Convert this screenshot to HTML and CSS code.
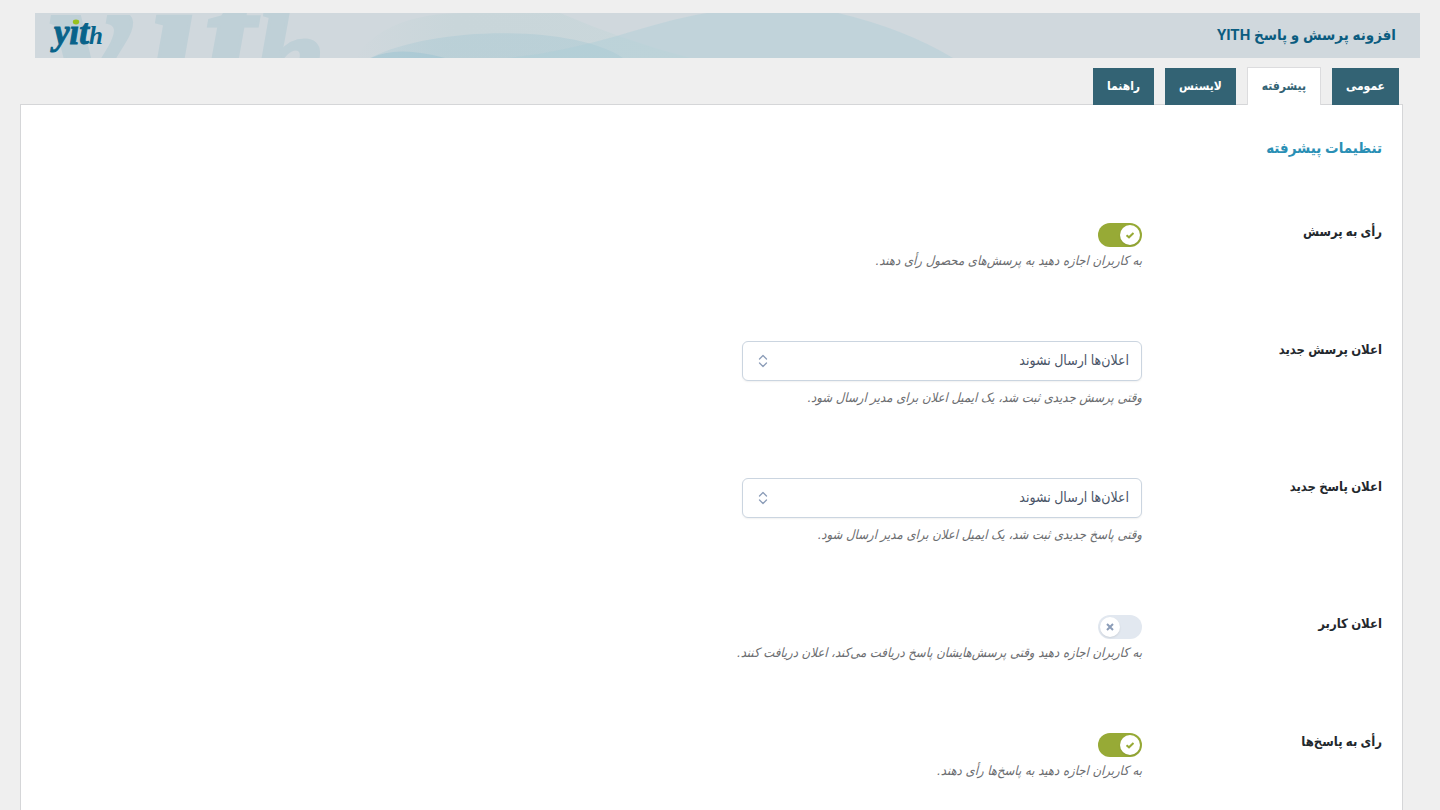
FILE: index.html
```html
<!DOCTYPE html>
<html lang="fa" dir="rtl">
<head>
<meta charset="UTF-8">
<meta name="viewport" content="width=device-width, initial-scale=1">
<title>افزونه پرسش و پاسخ YITH</title>
<link rel="stylesheet" href="styles.css">
</head>
<body>
  <header class="banner">
    <svg class="banner-art" width="1385" height="45" viewBox="0 0 1385 45" direction="ltr" aria-hidden="true">
      <defs>
        <linearGradient id="haze" x1="0" x2="1">
          <stop offset="0" stop-color="#c8d6da" stop-opacity="0"/>
          <stop offset="0.3" stop-color="#c9d6da"/>
          <stop offset="1" stop-color="#cad7db"/>
        </linearGradient>
        <linearGradient id="fade" x1="0" x2="1">
          <stop offset="0" stop-color="#a9c9d4" stop-opacity="0.3"/>
          <stop offset="0.25" stop-color="#a9c9d4" stop-opacity="0.45"/>
          <stop offset="1" stop-color="#a9c9d4" stop-opacity="0.45"/>
        </linearGradient>
      </defs>
      <text class="banner-mark" x="14 112 168 218" y="88">y&#305;t<tspan class="banner-mark-small">h</tspan></text>
      <path d="M320 45 Q350 0 430 0 H525 Q590 28 655 45Z" fill="url(#haze)"/>
      <path d="M335 45 C400 12 540 12 588 45Z" fill="url(#fade)"/>
      <path d="M336 45 Q362 32 410 45Z" fill="#9cc4d2" fill-opacity="0.5"/>
      <path d="M473 45 C560 36 610 10 672 0 H803 Q870 16 918 45Z" fill="#a9cdd6" fill-opacity="0.4"/>
    </svg>
    <svg class="logo" width="60" height="45" viewBox="0 0 60 45" direction="ltr" role="img" aria-label="yith">
      <text class="logo-text" x="5" y="32">y&#305;t<tspan class="logo-small">h</tspan></text>
      <ellipse cx="27" cy="10" rx="3.2" ry="2.4" fill="#98c11d"/>
    </svg>
    <h1>افزونه پرسش و پاسخ YITH</h1>
  </header>

  <nav class="tabs">
    <a href="#general">عمومی</a>
    <a href="#advanced" class="active">پیشرفته</a>
    <a href="#license">لایسنس</a>
    <a href="#help">راهنما</a>
  </nav>

  <main class="panel" id="advanced">
    <h2>تنظیمات پیشرفته</h2>
    <form>
      <div class="row">
        <label class="name" for="vote_question">رأی به پرسش</label>
        <div class="field">
          <span class="toggle">
            <input type="checkbox" id="vote_question" checked>
            <svg viewBox="0 0 20 20"><path class="on" d="M6.5 10.2 L9 12.3 L13.5 8"/><path class="off" d="M7 7 L13 13 M13 7 L7 13"/></svg>
          </span>
          <p>به کاربران اجازه دهید به پرسش‌های محصول رأی دهند.</p>
        </div>
      </div>
      <div class="row">
        <label class="name" for="notify_question">اعلان پرسش جدید</label>
        <div class="field">
          <span class="select">
            <select id="notify_question">
              <option>اعلان‌ها ارسال نشوند</option>
            </select>
            <svg viewBox="0 0 10 14"><path d="M1.5 5 L5 1.5 L8.5 5 M1.5 9 L5 12.5 L8.5 9"/></svg>
          </span>
          <p>وقتی پرسش جدیدی ثبت شد، یک ایمیل اعلان برای مدیر ارسال شود.</p>
        </div>
      </div>
      <div class="row">
        <label class="name" for="notify_answer">اعلان پاسخ جدید</label>
        <div class="field">
          <span class="select">
            <select id="notify_answer">
              <option>اعلان‌ها ارسال نشوند</option>
            </select>
            <svg viewBox="0 0 10 14"><path d="M1.5 5 L5 1.5 L8.5 5 M1.5 9 L5 12.5 L8.5 9"/></svg>
          </span>
          <p>وقتی پاسخ جدیدی ثبت شد، یک ایمیل اعلان برای مدیر ارسال شود.</p>
        </div>
      </div>
      <div class="row">
        <label class="name" for="notify_user">اعلان کاربر</label>
        <div class="field">
          <span class="toggle">
            <input type="checkbox" id="notify_user">
            <svg viewBox="0 0 20 20"><path class="on" d="M6.5 10.2 L9 12.3 L13.5 8"/><path class="off" d="M7 7 L13 13 M13 7 L7 13"/></svg>
          </span>
          <p>به کاربران اجازه دهید وقتی پرسش‌هایشان پاسخ دریافت می‌کند، اعلان دریافت کنند.</p>
        </div>
      </div>
      <div class="row">
        <label class="name" for="vote_answers">رأی به پاسخ‌ها</label>
        <div class="field">
          <span class="toggle">
            <input type="checkbox" id="vote_answers" checked>
            <svg viewBox="0 0 20 20"><path class="on" d="M6.5 10.2 L9 12.3 L13.5 8"/><path class="off" d="M7 7 L13 13 M13 7 L7 13"/></svg>
          </span>
          <p>به کاربران اجازه دهید به پاسخ‌ها رأی دهند.</p>
        </div>
      </div>
    </form>
  </main>
</body>
</html>
```
FILE: styles.css
```css
* {
  box-sizing: border-box;
}
body {
  margin: 0;
  padding-top: 13px;
  background: #efefef;
  color: #23282d;
  font-family: Roboto, "DejaVu Sans Condensed", "DejaVu Sans", sans-serif;
  font-size: 13px;
}
h1, h2, p {
  margin: 0;
}

/* header */
.banner {
  position: relative;
  display: flex;
  align-items: center;
  justify-content: space-between;
  flex-direction: row-reverse;
  height: 45px;
  margin: 0 20px 0 35px;
  padding: 0 24px 2px 14px;
  background: #d0d8dd;
  overflow: hidden;
}
.banner-art {
  position: absolute;
  top: 0;
  left: 0;
}
.banner-mark {
  fill: #bfd0d7;
  stroke: #bfd0d7;
  stroke-width: 3;
  font: italic bold 185px "Liberation Serif", serif;
}
.banner-mark-small {
  font-size: 130px;
}
.logo {
  position: relative;
  overflow: visible;
}
.logo-text {
  fill: #08638a;
  stroke: #08638a;
  stroke-width: 1;
  font: italic bold 35px "Liberation Serif", serif;
}
.logo-small {
  font-size: 25px;
  stroke-width: 0;
}
.banner h1 {
  position: relative;
  color: #0b5c80;
  font-size: 15px;
  line-height: 24px;
}

/* tabs */
.tabs {
  position: relative;
  display: flex;
  align-items: flex-end;
  gap: 11px;
  margin: 9px 41px -1px 20px;
}
.tabs a {
  height: 37px;
  padding: 0 14px;
  background: #336374;
  color: #fff;
  font-size: 12px;
  font-weight: bold;
  line-height: 36px;
  text-decoration: none;
}
.tabs a.active {
  height: 38px;
  border: 1px solid #dcdcde;
  border-bottom: 0;
  background: #fff;
  color: #336374;
}

/* settings panel */
.panel {
  margin: 0 37px 0 20px;
  padding: 31px 20px 0;
  border: 1px solid #d5d6d8;
  background: #fff;
}
.panel h2 {
  margin-bottom: 63px;
  color: #2a8fb5;
  font-size: 15px;
  line-height: 24px;
}
.row {
  display: flex;
  padding-bottom: 70px;
}
.name {
  width: 240px;
  font-size: 13px;
  font-weight: bold;
  line-height: 18px;
}
.field {
  flex: 1;
}
.field p {
  margin-top: 4px;
  color: #6b6d70;
  font-family: "DejaVu Sans Condensed", "DejaVu Sans", sans-serif;
  font-size: 13px;
  font-style: italic;
  line-height: 20px;
}

/* on / off switch */
.toggle {
  position: relative;
  display: block;
  width: 44px;
  height: 24px;
}
.toggle input {
  display: block;
  width: 44px;
  height: 24px;
  margin: 0;
  appearance: none;
  border-radius: 12px;
  background: #e2e8f0;
}
.toggle input:checked {
  background: #97aa36;
}
.toggle svg {
  position: absolute;
  top: 2px;
  left: 2px;
  width: 20px;
  height: 20px;
  border-radius: 10px;
  background: #fff;
  box-shadow: 0 1px 2px rgba(0, 0, 0, 0.1);
  fill: none;
  stroke: #8c9db8;
  stroke-width: 2;
  pointer-events: none;
}
.toggle input:checked + svg {
  left: 22px;
  stroke: #97aa36;
}
.toggle .on,
.toggle input:checked + svg .off {
  display: none;
}
.toggle input:checked + svg .on {
  display: inline;
}

/* drop-down */
.select {
  position: relative;
  display: block;
  max-width: 400px;
}
.select select {
  display: block;
  width: 100%;
  height: 40px;
  padding: 0 12px 2px;
  appearance: none;
  border: 1px solid #cbd5e0;
  border-radius: 6px;
  background: #fff;
  box-shadow: 0 1px 2px rgba(0, 0, 0, 0.06);
  color: #4a5568;
  font-family: inherit;
  font-size: 14px;
}
.select svg {
  position: absolute;
  top: 13px;
  left: 16px;
  width: 10px;
  height: 14px;
  fill: none;
  stroke: #8c9db8;
  stroke-width: 1.3;
  stroke-linecap: round;
  stroke-linejoin: round;
  pointer-events: none;
}
.field .select + p {
  margin-top: 7px;
}
```
